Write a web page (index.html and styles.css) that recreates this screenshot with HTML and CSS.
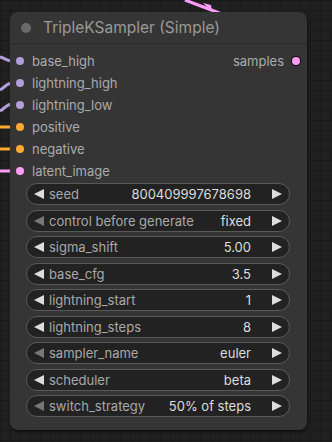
FILE: index.html
```html
<!DOCTYPE html>
<html>
<head>
<meta charset="utf-8">
<link rel="stylesheet" href="styles.css">
</head>
<body>
<div class="canvas">
  <svg class="links" width="332" height="442" viewBox="0 0 332 442">
    <path d="M0 57 C5 58 7 61 12 61" stroke="#b39ddb" stroke-width="3" fill="none"/>
    <path d="M0 90 C4 88 7 83 12 83" stroke="#b39ddb" stroke-width="3" fill="none"/>
    <path d="M0 111 C4 109 7 104 12 104" stroke="#b39ddb" stroke-width="3" fill="none"/>
    <path d="M0 127 L12 127" stroke="#ffa931" stroke-width="3" fill="none"/>
    <path d="M0 149 L12 149" stroke="#ffa931" stroke-width="3" fill="none"/>
    <path d="M0 171 L12 171" stroke="#ff9cf9" stroke-width="3" fill="none"/>
    <path d="M185 0 L222 14" stroke="#ff9cf9" stroke-width="3" fill="none"/>
    <path d="M203 3 L212 12 L211 5 Z" fill="#ff9cf9"/>
  </svg>
  <div class="node">
    <div class="title">
      <span class="title-dot"></span>
      <span class="title-text">TripleKSampler (Simple)</span>
    </div>
    <div class="io">
      <div class="inputs">
        <div class="slot"><span class="dot purple"></span>base_high</div>
        <div class="slot"><span class="dot purple"></span>lightning_high</div>
        <div class="slot"><span class="dot purple"></span>lightning_low</div>
        <div class="slot"><span class="dot orange"></span>positive</div>
        <div class="slot"><span class="dot orange"></span>negative</div>
        <div class="slot"><span class="dot pink"></span>latent_image</div>
      </div>
      <div class="outputs">
        <div class="slot out">samples<span class="dot pink outline"></span></div>
      </div>
    </div>
    <div class="widgets">
      <div class="widget"><span class="arr left"></span><span class="label">seed</span><span class="value">800409997678698</span><span class="arr right"></span></div>
      <div class="widget"><span class="arr left dim"></span><span class="label">control before generate</span><span class="value">fixed</span><span class="arr right"></span></div>
      <div class="widget"><span class="arr left"></span><span class="label">sigma_shift</span><span class="value">5.00</span><span class="arr right"></span></div>
      <div class="widget"><span class="arr left"></span><span class="label">base_cfg</span><span class="value">3.5</span><span class="arr right"></span></div>
      <div class="widget"><span class="arr left"></span><span class="label">lightning_start</span><span class="value">1</span><span class="arr right"></span></div>
      <div class="widget"><span class="arr left"></span><span class="label">lightning_steps</span><span class="value">8</span><span class="arr right"></span></div>
      <div class="widget"><span class="arr left dim"></span><span class="label">sampler_name</span><span class="value">euler</span><span class="arr right"></span></div>
      <div class="widget"><span class="arr left"></span><span class="label">scheduler</span><span class="value">beta</span><span class="arr right"></span></div>
      <div class="widget"><span class="arr left dim"></span><span class="label">switch_strategy</span><span class="value">50% of steps</span><span class="arr right"></span></div>
    </div>
  </div>
</div>
</body>
</html>
```
FILE: styles.css
```css
* { box-sizing: border-box; }
html, body { margin: 0; padding: 0; }
body {
  width: 332px;
  height: 442px;
  overflow: hidden;
  background-color: #202020;
  background-image:
    linear-gradient(to right, #1a1a1a 1px, transparent 1px),
    linear-gradient(to bottom, #1a1a1a 1px, transparent 1px);
  background-size: 10px 10px;
  font-family: Inter, "Liberation Sans", sans-serif;
}
.canvas {
  position: relative;
  width: 332px;
  height: 442px;
  padding: 12px 0 0 10px;
}
.links {
  position: absolute;
  left: 0;
  top: 0;
}
.node {
  position: relative;
  width: 297px;
  height: 418px;
  background: #353535;
  border-radius: 8px;
  box-shadow: 1px 2px 3px rgba(0,0,0,0.45);
}
.title {
  height: 32px;
  display: flex;
  align-items: center;
  padding-left: 11px;
  border-bottom: 1px solid #2b2b2b;
}
.title-dot {
  width: 10px;
  height: 10px;
  border-radius: 50%;
  background: #6a6a6a;
  margin-right: 12px;
}
.title-text {
  color: #9a9a9a;
  font-size: 15.5px;
}
.io {
  display: flex;
  justify-content: space-between;
  padding-top: 6px;
}
.slot {
  height: 22px;
  display: flex;
  align-items: center;
  font-size: 13px;
  color: #ababab;
}
.inputs .slot .dot { margin-left: 6px; margin-right: 8px; }
.out .dot { margin-left: 8px; margin-right: 7px; }
.dot {
  width: 8px;
  height: 8px;
  border-radius: 50%;
  display: inline-block;
}
.purple { background: #b39ddb; }
.orange { background: #ffa931; }
.pink { background: #ff9cf9; }
.outline { box-shadow: 0 0 0 1px #111; }
.widgets {
  display: flex;
  flex-direction: column;
  gap: 4.5px;
  padding: 1px 0 0 16px;
}
.widget {
  width: 264px;
  height: 22px;
  border-radius: 11px;
  background: #222222;
  border: 1px solid #595959;
  display: flex;
  align-items: center;
  padding: 0 7px 0 7px;
  font-size: 13px;
}
.label { color: #a9a9a9; flex: 1; white-space: nowrap; margin-left: 5px; }
.value { color: #dddddd; white-space: nowrap; margin-right: 21px; }
.arr {
  width: 0;
  height: 0;
  border-top: 5px solid transparent;
  border-bottom: 5px solid transparent;
}
.arr.left { border-right: 10px solid #dddddd; }
.arr.left.dim { border-right-color: #777777; }
.arr.right { border-left: 10px solid #dddddd; }
```
